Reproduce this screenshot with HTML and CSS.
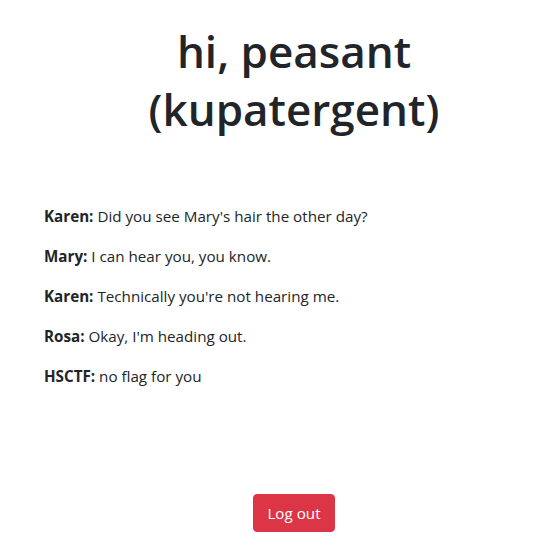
FILE: index.html
```html
<!DOCTYPE html>
<html>
<head>
<meta charset="utf-8">
<link rel="stylesheet" href="styles.css">
</head>
<body>
<div class="page">
  <h1 class="title">hi, peasant (kupatergent)</h1>
  <div class="messages">
    <p><b>Karen:</b> Did you see Mary's hair the other day?</p>
    <p><b>Mary:</b> I can hear you, you know.</p>
    <p><b>Karen:</b> Technically you're not hearing me.</p>
    <p><b>Rosa:</b> Okay, I'm heading out.</p>
    <p><b>HSCTF:</b> no flag for you</p>
  </div>
  <div class="actions">
    <button class="btn-logout">Log out</button>
  </div>
</div>
</body>
</html>
```

FILE: styles.css
```css
html, body {
  margin: 0;
  padding: 0;
  background: #fff;
}
body {
  font-family: "Open Sans", "Noto Sans", sans-serif;
  font-size: 15.2px;
  line-height: 24px;
  color: #212529;
}
.page {
  padding: 23px 10px 0 44px;
  display: flex;
  flex-direction: column;
}
.title {
  margin: 0 auto 0;
  max-width: 320px;
  text-align: center;
  font-size: 44px;
  font-weight: 600;
  line-height: 57.6px;
}
.messages {
  margin-top: 66px;
}
.messages p {
  margin: 0 0 16px 0;
}
.messages b {
  font-weight: 700;
}
.actions {
  margin-top: 90px;
  display: flex;
  justify-content: center;
}
.btn-logout {
  font-family: inherit;
  font-size: 15.2px;
  line-height: 24px;
  padding: 6px 13px;
  height: 38px;
  color: #fff;
  background: #dc3545;
  border: 1px solid #dc3545;
  border-radius: 4px;
}
```
